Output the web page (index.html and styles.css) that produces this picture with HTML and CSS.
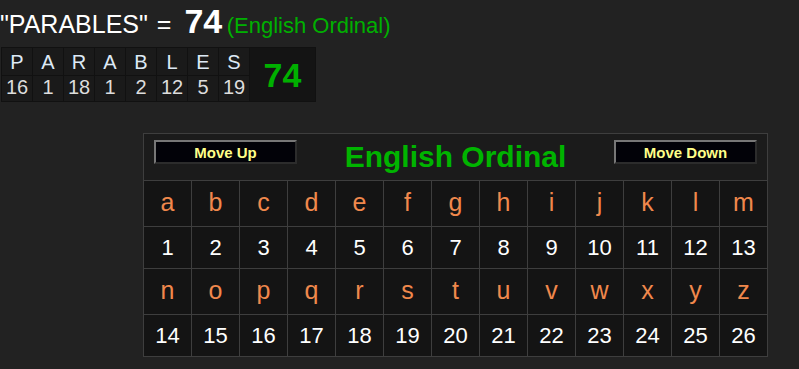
FILE: index.html
```html
<!DOCTYPE html>
<html lang="en">
<head>
  <meta charset="UTF-8">
  <title>Gematria - PARABLES</title>
  <link rel="stylesheet" href="styles.css">
</head>
<body>

  <div class="result">
    <span class="phrase">"PARABLES" = </span><span class="sum">74</span>
    <span class="cipher-name">(English Ordinal)</span>
  </div>

  <table class="breakdown">
    <tr class="letters">
      <td>P</td><td>A</td><td>R</td><td>A</td><td>B</td><td>L</td><td>E</td><td>S</td>
      <td class="total" rowspan="2">74</td>
    </tr>
    <tr class="values">
      <td>16</td><td>1</td><td>18</td><td>1</td><td>2</td><td>12</td><td>5</td><td>19</td>
    </tr>
  </table>

  <table class="chart">
    <tr>
      <td class="chart-head" colspan="13">
        <div class="chart-bar">
          <button class="move">Move Up</button>
          <span class="chart-title">English Ordinal</span>
          <button class="move">Move Down</button>
        </div>
      </td>
    </tr>
    <tr class="chars">
      <td>a</td><td>b</td><td>c</td><td>d</td><td>e</td><td>f</td><td>g</td>
      <td>h</td><td>i</td><td>j</td><td>k</td><td>l</td><td>m</td>
    </tr>
    <tr class="nums">
      <td>1</td><td>2</td><td>3</td><td>4</td><td>5</td><td>6</td><td>7</td>
      <td>8</td><td>9</td><td>10</td><td>11</td><td>12</td><td>13</td>
    </tr>
    <tr class="chars">
      <td>n</td><td>o</td><td>p</td><td>q</td><td>r</td><td>s</td><td>t</td>
      <td>u</td><td>v</td><td>w</td><td>x</td><td>y</td><td>z</td>
    </tr>
    <tr class="nums">
      <td>14</td><td>15</td><td>16</td><td>17</td><td>18</td><td>19</td><td>20</td>
      <td>21</td><td>22</td><td>23</td><td>24</td><td>25</td><td>26</td>
    </tr>
  </table>

</body>
</html>
```

FILE: styles.css
```css
* {
  margin: 0;
  padding: 0;
  box-sizing: border-box;
  font-family: "Liberation Sans", Arial, sans-serif;
}

body {
  background-color: #222222;
  color: white;
  width: 799px;
  height: 369px;
  overflow: hidden;
}

.result {
  height: 47px;
  padding-top: 2px;
  white-space: nowrap;
  line-height: 38px;
}

.result .phrase {
  font-size: 25px;
  word-spacing: 2px;
}

.result .sum {
  font-size: 34px;
  font-weight: bold;
  margin-left: 4px;
}

.result .cipher-name {
  font-size: 22px;
  color: #00b000;
}

.breakdown {
  margin-left: 1px;
  border-collapse: collapse;
  background-color: #1a1a1a;
}

.breakdown td {
  border: 1px solid #111111;
  width: 31px;
  text-align: center;
  font-size: 20px;
  color: #dde9f5;
}

.breakdown .letters td {
  height: 28px;
  padding-top: 2px;
}

.breakdown .values td {
  height: 26px;
  color: #dddddd;
  padding-bottom: 2px;
}

.breakdown .total {
  width: 66px;
  background-color: #141414;
  color: #00b000;
  font-size: 34px;
  font-weight: bold;
  padding: 2px 0 0 0;
}

.chart {
  margin: 31px 0 0 143px;
  border-collapse: collapse;
  border: 1px solid #3e3e3e;
  background-color: #141414;
}

.chart td {
  border: 1px solid #3e3e3e;
  width: 48px;
  text-align: center;
}

.chart .chart-head {
  background-color: #1b1b1b;
  height: 47px;
  padding: 0 10px;
  vertical-align: top;
}

.chart-bar {
  display: flex;
  align-items: flex-start;
  justify-content: space-between;
}

.move {
  width: 143px;
  height: 24px;
  margin-top: 6px;
  background-color: #020208;
  border: 2px solid;
  border-color: #777777 #2c2c2c #2c2c2c #777777;
  color: #ffff88;
  font-size: 15px;
  font-weight: bold;
}

.chart-title {
  color: #00b400;
  font-size: 30px;
  font-weight: bold;
  margin-top: 6px;
}

.chart .chars td {
  height: 46px;
  font-size: 25px;
  color: #f0884c;
  padding-bottom: 3px;
}

.chart .nums td {
  height: 42px;
  font-size: 22px;
  color: white;
}
```
